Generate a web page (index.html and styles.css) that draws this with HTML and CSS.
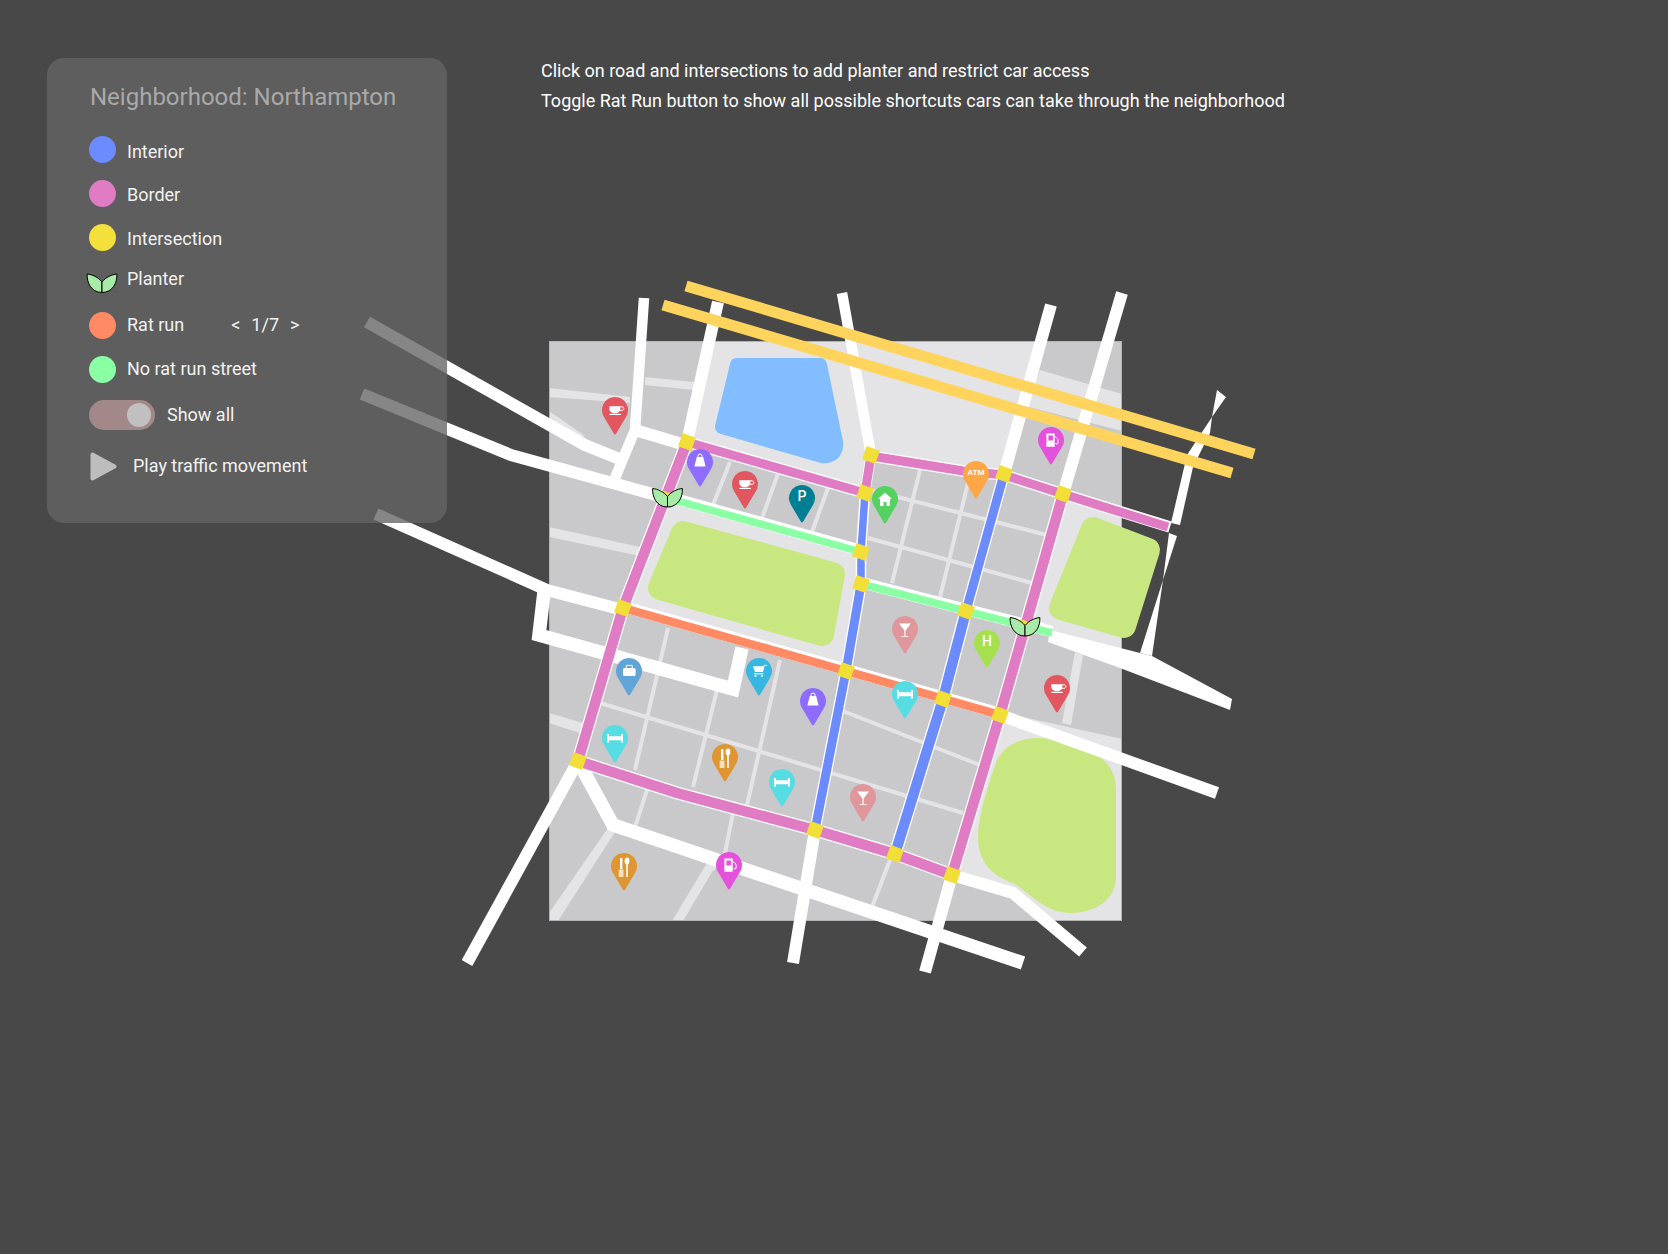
FILE: index.html
```html
<!DOCTYPE html>
<html lang="en">
<head>
    <meta charset="UTF-8">
    <title>Neighborhood: Northampton</title>
    <link rel="stylesheet" href="styles.css">
</head>
<body>

    <!-- street map, coordinates are page pixels -->
    <svg class="map" width="1668" height="1254" viewBox="0 0 1668 1254">
        <defs>
            <path id="pin" d="M0 -13A13 13 0 0 1 11 6.9L1.2 23.6Q0 25.4 -1.2 23.6L-11 6.9A13 13 0 0 1 0 -13Z"/>
            <g id="leaves">
                <path d="M0 9.5V-1C-4 -6 -10 -8.5 -14.8 -9C-15.5 -1 -11 9.5 0 9.5Z"/>
                <path d="M0 9.5V-1C4 -6 10 -8.5 14.8 -9C15.5 -1 11 9.5 0 9.5Z"/>
            </g>
            <g id="i-coffee">
                <path d="M-5.7 -3.7H5.3V-1C5.3 1 3.7 2.4 1.5 3.2H-2C-4 2.4 -5.7 1 -5.7 -1Z"/>
                <path class="thin" d="M5 -3.2H7C9.5 -3.2 9.5 0.3 7 0.3H4.5"/>
                <rect x="-5.7" y="3.8" width="11.5" height="1.2"/>
            </g>
            <g id="i-bag">
                <path d="M-3.2 -5H3.2L5.6 4.5H-5.6Z"/>
                <path class="thin" d="M-2 -5V-6A2 2 0 0 1 2 -6V-5"/>
            </g>
            <path id="i-home" d="M0 -6.5L7 0H5V7H1.5V3H-1.5V7H-5V0H-7Z"/>
            <g id="i-fuel">
                <path fill-rule="evenodd" d="M-4.6 -6.6H3.7V6.8H-4.6ZM-2.6 -4.5V0.5H2V-4.5Z"/>
                <path class="thin" d="M3.7 -3.5C7 -2 7.5 0 7 3C6.5 4.6 5 4.4 4.5 3"/>
            </g>
            <g id="i-cocktail">
                <path d="M-6 -5.6H6L0.6 1.5V7.3H3.5V8.1H-3.5V7.3H-0.6V1.5Z"/>
            </g>
            <path id="i-hotel" d="M-8 -4H-6V-1.8H6V-4H8V4.5H6V2.2H-6V4.5H-8Z"/>
            <g id="i-case">
                <rect x="-6" y="-3" width="12.6" height="8" rx="1.6"/>
                <path class="thin" d="M-2.6 -3V-5.6H3.2V-3"/>
            </g>
            <g id="i-cart">
                <path d="M-6 -4.8H5.5L4 1H-4Z"/>
                <path class="thin" d="M4.6 -5.6H8M-5 2.8H4.4"/>
                <circle cx="-3.5" cy="4.8" r="1.1"/>
                <circle cx="3" cy="4.8" r="1.1"/>
            </g>
            <g id="i-food">
                <rect x="-4" y="-8" width="2.4" height="11"/>
                <path class="fork" d="M-5.3 3.5H-0.5V11H-5.3Z"/>
                <ellipse cx="3" cy="-5" rx="2.4" ry="3.4"/>
                <rect x="2.2" y="-3" width="1.6" height="14"/>
            </g>
            <rect id="cross" x="-7" y="-7" width="14" height="14"/>
        </defs>

        <rect class="ground" x="549" y="341" width="573" height="580"/>

        <!-- light areas -->
        <path class="light" d="M716 341H1036L1004 474L871 455L865 493L687 442Z"/>
        <path class="light" d="M1040 370L1122 394V431L1025 406Z"/>
        <path class="light" d="M667 498L861 552V584L846 671L623 608Z"/>
        <path class="light" d="M1063 494L1122 513V650L1050 632L1022 620Z"/>
        <path class="light" d="M1000 712L1122 739V921H1056L1013 893L952 875Z"/>
        <path class="light" d="M549 388L630 397V403L549 397Z"/>
        <path class="light" d="M645 377L694 382V390L645 385Z"/>
        <path class="light" d="M549 527L640 547V556L549 537Z"/>
        <path class="light" d="M549 713L583 723L580 733L549 723Z"/>
        <path class="light" d="M549 411L585 436L575 438L549 425Z"/>
        <path class="light" d="M1075 652L1083 655L1071 725L1062 723Z"/>
        <path class="light" d="M608 828L615 832L558 921H549V913Z"/>
        <path class="light" d="M707 863L715 867L683 921H672Z"/>

        <!-- side streets -->
        <path class="lane" d="M730 462L713 505M778 474L762 518M828 488L812 532"/>
        <path class="lane" d="M920 470L892 583M968 483L940 597M870 490L1047 535M868 538L1032 583"/>
        <path class="lane" d="M668 628L635 770M717 690L693 787M780 660L747 805M600 703L963 813M843 711L980 765"/>
        <path class="lane" d="M648 787L635 827M733 813L725 853L712 870M890 860L872 907"/>

        <rect class="map-edge" x="549.5" y="341.5" width="572" height="579"/>

        <!-- lake and parks -->
        <path class="lake" d="M737 365H820L836 442Q837 450 832 454Q828 457 822 456L722 427Z"/>
        <path class="park" d="M683 533L833 574L822 634L660 588Z"/>
        <path class="park" d="M1093 529L1148 550L1124 626L1061 608Z"/>
        <path class="park-blob" d="M1038 738C1060 738 1075 745 1083 750C1105 755 1116 770 1116 790V877C1116 900 1095 913 1070 913C1045 913 1030 893 1013 883C990 875 978 860 978 837C978 815 990 780 997 760C1005 745 1020 738 1038 738Z"/>

        <!-- white roads -->
        <path class="road" d="M367 322L585 445L622 460"/>
        <path class="road" d="M362 394L511 455L667 498"/>
        <path class="road" d="M376 514L547 590L623 610"/>
        <path class="road wide" d="M544 592L539 635L733 689L742 648"/>
        <path class="road slim" d="M644 298L635 430L615 478"/>
        <path class="road" d="M635 430L682 444"/>
        <path class="road" d="M718 302L687 442"/>
        <path class="road slim" d="M842 293L871 455"/>
        <path class="road" d="M1051 305L1004 474"/>
        <path class="road" d="M1122 293L1063 494"/>
        <path class="road" d="M578 761L467 963"/>
        <path class="road wide" d="M578 761L613 825L1023 963"/>
        <path class="road" d="M815 830L793 963"/>
        <path class="road" d="M952 875L925 972"/>
        <path class="road" d="M952 875L1013 893L1083 952"/>
        <path class="road" d="M1000 715L1217 793"/>
        <path class="road-fill" d="M1050 630L1140 653L1152 656L1232 699L1230 710L1120 668L1048 642Z"/>
        <path class="road-fill" d="M1217 390L1226 397L1212 417L1210 433L1193 467L1180 525L1171 523L1187 455L1212 417Z"/>
        <path class="road-fill" d="M1169 533L1177 536L1163 580L1152 656L1140 653L1163 580Z"/>

        <!-- casing under the coloured streets -->
        <path class="casing" d="M687 442L865 493M871 456L963 471L1004 475L1063 494L1170 527"/>
        <path class="casing thick" d="M687 442L623 608L578 761M578 761L677 793L815 830L895 854L952 875M1063 494L1000 715L952 875"/>
        <path class="casing narrow" d="M871 455L865 493L861 552V584"/>
        <path class="casing" d="M1004 474L966 611M861 584L846 671L815 830"/>
        <path class="casing thick" d="M966 611L943 699L895 854"/>
        <path class="casing" d="M667 496.5L861 550.5M861 582.5L966 609.5L1052 631.5M623 606.5L846 669.5L1000 713.5"/>

        <path class="street border" d="M687 442L865 493M871 456L963 471L1004 475L1063 494L1168 527"/>
        <path class="street border wider" d="M687 442L623 608L578 761M578 761L677 793L815 830L895 854L952 875M1063 494L1000 715L952 875"/>
        <path class="street border" d="M871 455L865 493"/>
        <path class="street interior narrow" d="M865 493L861 552V584"/>
        <path class="street interior" d="M861 584L846 671L815 830M1004 474L966 611"/>
        <path class="street interior wider" d="M966 611L943 699L895 854"/>
        <path class="street calm" d="M667 498L861 552M861 584L966 611L1052 633"/>
        <path class="street ratrun" d="M623 608L846 671L1000 715"/>

        <!-- main roads on top -->
        <path class="highway" d="M686 286L1254 454"/>
        <path class="highway" d="M663 305L1232 473"/>

        <!-- intersections -->
        <g class="crossings">
            <use href="#cross" transform="translate(687 442) rotate(19)"/>
            <use href="#cross" transform="translate(871 455) rotate(19)"/>
            <use href="#cross" transform="translate(865 493) rotate(19)"/>
            <use href="#cross" transform="translate(861 552) rotate(19)"/>
            <use href="#cross" transform="translate(861 584) rotate(19)"/>
            <use href="#cross" transform="translate(1004 474) rotate(19)"/>
            <use href="#cross" transform="translate(1063 494) rotate(19)"/>
            <use href="#cross" transform="translate(966 611) rotate(19)"/>
            <use href="#cross" transform="translate(846 671) rotate(19)"/>
            <use href="#cross" transform="translate(943 699) rotate(19)"/>
            <use href="#cross" transform="translate(1000 715) rotate(19)"/>
            <use href="#cross" transform="translate(623 608) rotate(19)"/>
            <use href="#cross" transform="translate(578 761) rotate(19)"/>
            <use href="#cross" transform="translate(815 830) rotate(19)"/>
            <use href="#cross" transform="translate(895 854) rotate(19)"/>
            <use href="#cross" transform="translate(952 875) rotate(19)"/>
            <use href="#cross" transform="translate(667 499.5) rotate(19)"/>
            <use href="#cross" transform="translate(1025 628) rotate(19)"/>
        </g>

        <!-- pins -->
        <g class="pin coffee" transform="translate(615 410)"><use href="#pin"/><use class="glyph" href="#i-coffee"/></g>
        <g class="pin shop" transform="translate(700 462)"><use href="#pin"/><use class="glyph" href="#i-bag"/></g>
        <g class="pin coffee" transform="translate(745 484)"><use href="#pin"/><use class="glyph" href="#i-coffee"/></g>
        <g class="pin parking" transform="translate(802 498)"><use href="#pin"/><text class="pin-label" y="3">P</text></g>
        <g class="pin house" transform="translate(885 499)"><use href="#pin"/><use class="glyph" href="#i-home"/></g>
        <g class="pin atm" transform="translate(976 474)"><use href="#pin"/><text class="pin-label small" y="0.5">ATM</text></g>
        <g class="pin fuel" transform="translate(1051 440)"><use href="#pin"/><use class="glyph" href="#i-fuel"/></g>
        <g class="pin bar" transform="translate(905 629)"><use href="#pin"/><use class="glyph" href="#i-cocktail"/></g>
        <g class="pin hospital" transform="translate(987 643)"><use href="#pin"/><text class="pin-label" y="3">H</text></g>
        <g class="pin coffee" transform="translate(1057 688)"><use href="#pin"/><use class="glyph" href="#i-coffee"/></g>
        <g class="pin hotel" transform="translate(905 694)"><use href="#pin"/><use class="glyph" href="#i-hotel"/></g>
        <g class="pin shop" transform="translate(813 701)"><use href="#pin"/><use class="glyph" href="#i-bag"/></g>
        <g class="pin office" transform="translate(629 671)"><use href="#pin"/><use class="glyph" href="#i-case"/></g>
        <g class="pin market" transform="translate(759 671)"><use href="#pin"/><use class="glyph" href="#i-cart"/></g>
        <g class="pin hotel" transform="translate(615 738)"><use href="#pin"/><use class="glyph" href="#i-hotel"/></g>
        <g class="pin food" transform="translate(725 757)"><use href="#pin"/><use class="glyph" href="#i-food"/></g>
        <g class="pin hotel" transform="translate(782 782)"><use href="#pin"/><use class="glyph" href="#i-hotel"/></g>
        <g class="pin bar" transform="translate(863 797)"><use href="#pin"/><use class="glyph" href="#i-cocktail"/></g>
        <g class="pin food" transform="translate(624 866)"><use href="#pin"/><use class="glyph" href="#i-food"/></g>
        <g class="pin fuel" transform="translate(729 865)"><use href="#pin"/><use class="glyph" href="#i-fuel"/></g>

        <!-- planters -->
        <use class="planter" href="#leaves" transform="translate(667.5 497.5)"/>
        <use class="planter" href="#leaves" transform="translate(1025 626.5)"/>
    </svg>

    <div class="layout">
        <aside class="panel">
            <h1 class="panel-title">Neighborhood: Northampton</h1>
            <div class="row"><span class="dot dot-interior"></span><span class="label label-low">Interior</span></div>
            <div class="row"><span class="dot dot-border"></span><span class="label">Border</span></div>
            <div class="row"><span class="dot dot-intersection"></span><span class="label">Intersection</span></div>
            <div class="row row-planter">
                <svg class="planter-icon" width="32" height="20" viewBox="-16 -10 32 20"><use class="planter" href="#leaves"/></svg>
                <span class="label">Planter</span>
            </div>
            <div class="row">
                <span class="dot dot-ratrun"></span><span class="label label-mid">Rat run</span>
                <span class="pager"><span>&lt;</span><span>1/7</span><span>&gt;</span></span>
            </div>
            <div class="row"><span class="dot dot-calm"></span><span class="label label-mid">No rat run street</span></div>
            <div class="row row-toggle">
                <div class="toggle"><span class="knob"></span></div>
                <span class="label">Show all</span>
            </div>
            <div class="row row-play">
                <svg class="play-icon" width="27" height="29" viewBox="0 0 27 29"><path d="M2.5 2.5L24.5 14.5L2.5 26.5Z"/></svg>
                <span class="label">Play traffic movement</span>
            </div>
        </aside>

        <div class="help">
            <p>Click on road and intersections to add planter and restrict car access</p>
            <p>Toggle Rat Run button to show all possible shortcuts cars can take through the neighborhood</p>
        </div>
    </div>

</body>
</html>
```

FILE: styles.css
```css
body {
    margin: 0;
    width: 1668px;
    height: 1254px;
    position: relative;
    overflow: hidden;
    background-color: #484848;
    font-family: Roboto, "Liberation Sans", sans-serif;
    color: #fff;
}

.layout {
    position: relative;
    display: flex;
    align-items: flex-start;
    padding: 58px 0 0 47px;
}

.map {
    position: absolute;
    top: 0;
    left: 0;
}

/* map layers */
.ground {
    fill: #c9c9cb;
}

.light {
    fill: #e4e4e6;
}

.map-edge {
    fill: none;
    stroke: #b4b4b4;
    stroke-width: 1;
}

.lane {
    fill: none;
    stroke: #e4e4e6;
    stroke-width: 4;
}

.lake {
    fill: #82bdff;
    stroke: #82bdff;
    stroke-width: 14;
    stroke-linejoin: round;
}

.park {
    fill: #c9e781;
    stroke: #c9e781;
    stroke-width: 24;
    stroke-linejoin: round;
}

.park-blob {
    fill: #c9e781;
}

.road {
    fill: none;
    stroke: #fff;
    stroke-width: 12;
}

.road.wide {
    stroke-width: 13.5;
}

.road.slim {
    stroke-width: 10.5;
}

.road-fill {
    fill: #fff;
}

.casing {
    fill: none;
    stroke: #fff;
    stroke-width: 11.5;
}

.casing.thick {
    stroke-width: 13;
}

.casing.narrow {
    stroke-width: 10.5;
}

.street {
    fill: none;
    stroke-width: 9;
}

.street.wider {
    stroke-width: 10.5;
}

.street.narrow {
    stroke-width: 7.5;
}

.border {
    stroke: #df7cc4;
}

.interior {
    stroke: #6b8bff;
}

.street.calm {
    stroke: #8affa3;
    stroke-width: 7.5;
}

.street.ratrun {
    stroke: #ff8a63;
    stroke-width: 8.5;
}

.highway {
    fill: none;
    stroke: #ffd45c;
    stroke-width: 11;
}

.crossings {
    fill: #f1de37;
}

.planter {
    fill: #a8eaa8;
    stroke: #000;
    stroke-width: 1;
}

/* pins */
.glyph {
    fill: #fff;
    stroke: none;
}

.thin {
    fill: none;
    stroke: #fff;
    stroke-width: 1;
}

.fork {
    opacity: 0.7;
}

.pin-label {
    fill: #fff;
    font-size: 14px;
    font-weight: 500;
    text-anchor: middle;
}

.pin-label.small {
    font-size: 8px;
    font-weight: 700;
}

.coffee { fill: #e2575f; }
.shop { fill: #8d6cff; }
.parking { fill: #007e94; }
.house { fill: #54d160; }
.atm { fill: #ffa647; }
.fuel { fill: #e452dc; }
.bar { fill: #e0979b; }
.hospital { fill: #a6e04f; }
.hotel { fill: #56dde3; }
.office { fill: #60a4d8; }
.market { fill: #36b6e0; }
.food { fill: #e09630; }

/* legend panel */
.panel {
    box-sizing: border-box;
    width: 400px;
    height: 465px;
    flex-shrink: 0;
    padding: 24px 0 0 42px;
    background-color: rgba(100, 100, 100, 0.78);
    border-radius: 17px;
}

.panel-title {
    margin: 0 0 15px 1px;
    font-size: 24px;
    line-height: 30px;
    font-weight: 400;
    color: #a9a9a9;
}

.row {
    display: flex;
    align-items: center;
    height: 44px;
    font-size: 18px;
}

.label {
    margin-top: 3px;
    margin-left: 11px;
    color: #f2f2f2;
}

.label-low {
    margin-top: 5px;
}

.label-mid {
    margin-top: -2px;
}

.dot {
    width: 27px;
    height: 27px;
    border-radius: 50%;
}

.dot-interior { background-color: #6b8bff; }
.dot-border { background-color: #df7cc4; }
.dot-intersection { background-color: #f3e03b; }
.dot-ratrun { background-color: #ff8a63; }
.dot-calm { background-color: #8affa3; }

.row-planter .planter-icon {
    margin: 4px 0 0 -3px;
}

.row-planter .label {
    margin: -6px 0 0 9px;
}

.row .pager {
    display: flex;
    gap: 11px;
    margin: -1px 0 0 47px;
    color: #f2f2f2;
}

.row-toggle {
    height: 48px;
}

.row-toggle .label {
    margin: -2px 0 0 12px;
}

.toggle {
    box-sizing: border-box;
    display: flex;
    justify-content: flex-end;
    align-items: center;
    width: 66px;
    height: 30px;
    padding-right: 4px;
    background-color: #a28888;
    border-radius: 15px;
}

.knob {
    width: 24px;
    height: 24px;
    border-radius: 50%;
    background-color: #c0c0c0;
}

.row-play {
    height: 54px;
}

.row-play .play-icon {
    margin-left: 1px;
}

.play-icon path {
    fill: #bdbdbd;
    stroke: #bdbdbd;
    stroke-width: 4;
    stroke-linejoin: round;
}

.row-play .label {
    margin: -2px 0 0 16px;
}

/* instructions */
.help {
    margin: -2px 0 0 94px;
    font-size: 18px;
    line-height: 30px;
}

.help p {
    margin: 0;
}
```
